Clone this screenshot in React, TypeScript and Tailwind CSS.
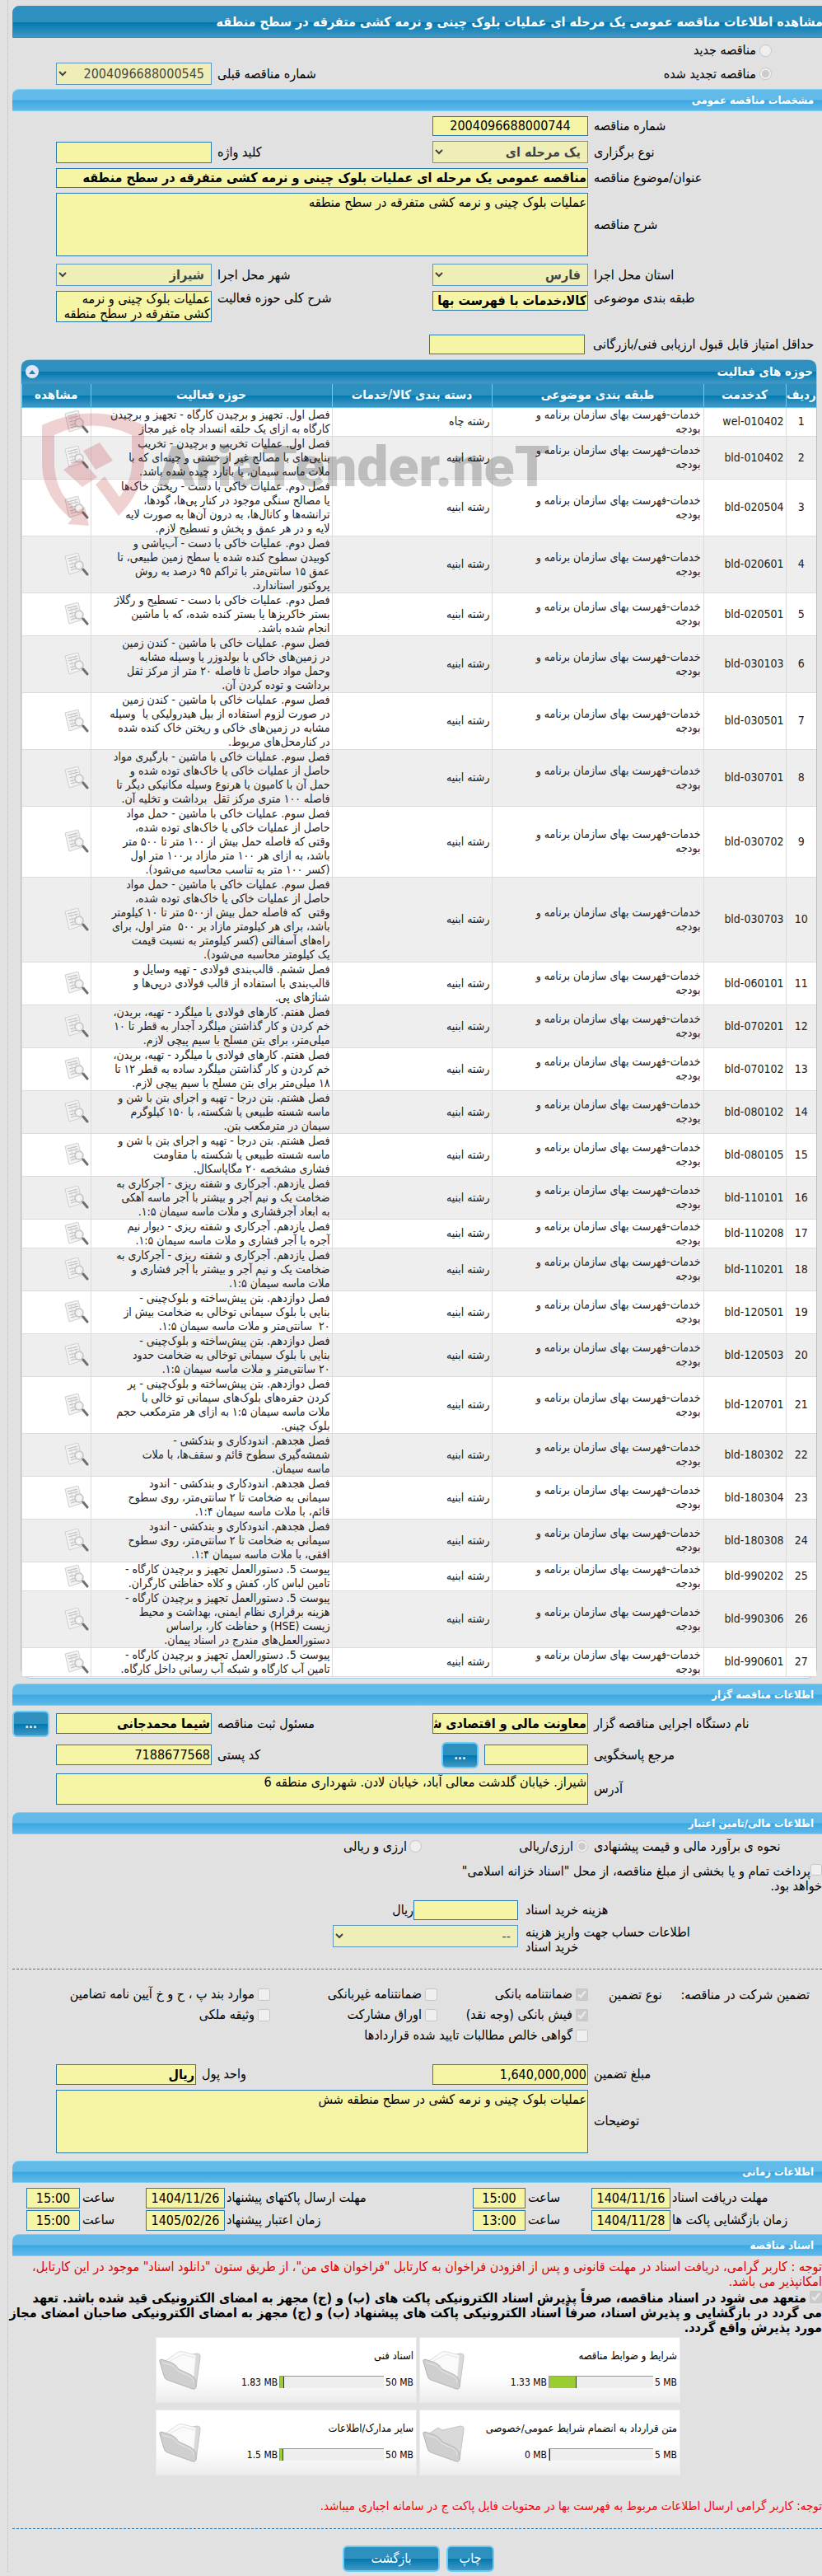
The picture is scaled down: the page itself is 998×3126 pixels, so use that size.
import type { ReactNode } from 'react';

const categoryText = 'خدمات-فهرست بهای سازمان برنامه و\nبودجه';

const activities = [
  { code: 'wel-010402', group: 'رشته چاه', text: 'فصل اول. تجهیز و برچیدن کارگاه - تجهیز و برچیدن\nکارگاه به ازای یک حلقه انسداد چاه غیر مجاز' },
  { code: 'bld-010402', group: 'رشته ابنیه', text: 'فصل اول. عملیات تخریب و برچیدن - تخریب\nبنایی‌های با مصالح غیر از خشتی و چینه‌ای که با\nملات ماسه سیمان، یا باتارد چیده شده باشد.' },
  { code: 'bld-020504', group: 'رشته ابنیه', text: 'فصل دوم. عملیات خاکی با دست - ریختن خاک‌ها\nیا مصالح سنگی موجود در کنار پی‌ها، گودها،\nترانشه‌ها و کانال‌ها، به درون آن‌ها به صورت لایه\nلایه و در هر عمق و پخش و تسطیح لازم.' },
  { code: 'bld-020601', group: 'رشته ابنیه', text: 'فصل دوم. عملیات خاکی با دست - آب‌پاشی و\nکوبیدن سطوح کنده شده یا سطح زمین طبیعی، تا\nعمق ۱۵ سانتی‌متر با تراکم ۹۵ درصد به روش\nپروکتور استاندارد.' },
  { code: 'bld-020501', group: 'رشته ابنیه', text: 'فصل دوم. عملیات خاکی با دست - تسطیح و رگلاژ\nبستر خاکریزها یا بستر کنده شده، که با ماشین\nانجام شده باشد.' },
  { code: 'bld-030103', group: 'رشته ابنیه', text: 'فصل سوم. عملیات خاکی با ماشین - کندن زمین\nدر زمین‌های خاکی با بولدوزر یا وسیله مشابه\nوحمل مواد حاصل تا فاصله ۲۰ متر از مرکز ثقل\nبرداشت و توده کردن آن.' },
  { code: 'bld-030501', group: 'رشته ابنیه', text: 'فصل سوم. عملیات خاکی با ماشین - کندن زمین\nدر صورت لزوم استفاده از بیل هیدرولیکی یا  وسیله\nمشابه در زمین‌های خاکی و ریختن خاک کنده شده\nدر کنارمحل‌های مربوط.' },
  { code: 'bld-030701', group: 'رشته ابنیه', text: 'فصل سوم. عملیات خاکی با ماشین - بارگیری مواد\nحاصل از عملیات خاکی یا خاک‌های توده شده و\nحمل آن با کامیون یا هرنوع وسیله مکانیکی دیگر تا\nفاصله ۱۰۰ متری مرکز ثقل  برداشت و تخلیه آن.' },
  { code: 'bld-030702', group: 'رشته ابنیه', text: 'فصل سوم. عملیات خاکی با ماشین - حمل مواد\nحاصل از عملیات خاکی یا خاک‌های توده شده،\nوقتی که فاصله حمل بیش از ۱۰۰ متر تا ۵۰۰ متر\nباشد، به ازای هر ۱۰۰ متر مازاد بر۱۰۰ متر اول\n(کسر ۱۰۰ متر به تناسب محاسبه می‌شود).' },
  { code: 'bld-030703', group: 'رشته ابنیه', text: 'فصل سوم. عملیات خاکی با ماشین - حمل مواد\nحاصل از عملیات خاکی یا خاک‌های توده شده،\nوقتی  که فاصله حمل بیش از۵۰۰ متر تا ۱۰ کیلومتر\nباشد، برای هر کیلومتر مازاد بر ۵۰۰  متر اول، برای\nراه‌های آسفالتی (کسر کیلومتر به نسبت قیمت\nیک کیلومتر محاسبه می‌شود).' },
  { code: 'bld-060101', group: 'رشته ابنیه', text: 'فصل ششم. قالب‌بندی فولادی - تهیه وسایل و\nقالب‌بندی با استفاده از قالب فولادی درپی‌ها و\nشناژهای پی.' },
  { code: 'bld-070201', group: 'رشته ابنیه', text: 'فصل هفتم. کارهای فولادی با میلگرد - تهیه، بریدن،\nخم کردن و کار گذاشتن میلگرد آجدار به قطر تا ۱۰\nمیلی‌متر، برای بتن مسلح با سیم پیچی لازم.' },
  { code: 'bld-070102', group: 'رشته ابنیه', text: 'فصل هفتم. کارهای فولادی با میلگرد - تهیه، بریدن،\nخم کردن و کار گذاشتن میلگرد ساده به قطر ۱۲ تا\n۱۸ میلی‌متر برای بتن مسلح با سیم پیچی لازم.' },
  { code: 'bld-080102', group: 'رشته ابنیه', text: 'فصل هشتم. بتن درجا - تهیه و اجرای بتن با شن و\nماسه شسته طبیعی یا شکسته، با ۱۵۰ کیلوگرم\nسیمان در مترمکعب بتن.' },
  { code: 'bld-080105', group: 'رشته ابنیه', text: 'فصل هشتم. بتن درجا - تهیه و اجرای بتن با شن و\nماسه شسته طبیعی یا شکسته با مقاومت\nفشاری مشخصه ۲۰ مگاپاسکال.' },
  { code: 'bld-110101', group: 'رشته ابنیه', text: 'فصل یازدهم. آجرکاری و شفته ریزی - آجرکاری به\nضخامت یک و نیم آجر و بیشتر با آجر ماسه آهکی\nبه ابعاد آجرفشاری و ملات ماسه سیمان ۱:۵.' },
  { code: 'bld-110208', group: 'رشته ابنیه', text: 'فصل یازدهم. آجرکاری و شفته ریزی - دیوار نیم\nآجره با آجر فشاری و ملات ماسه سیمان ۱:۵.' },
  { code: 'bld-110201', group: 'رشته ابنیه', text: 'فصل یازدهم. آجرکاری و شفته ریزی - آجرکاری به\nضخامت یک و نیم آجر و بیشتر با آجر فشاری و\nملات ماسه سیمان ۱:۵.' },
  { code: 'bld-120501', group: 'رشته ابنیه', text: 'فصل دوازدهم. بتن پیش‌ساخته و بلوک‌چینی -\nبنایی با بلوک سیمانی توخالی به ضخامت بیش از\n۲۰  سانتی‌متر و ملات ماسه سیمان ۱:۵.' },
  { code: 'bld-120503', group: 'رشته ابنیه', text: 'فصل دوازدهم. بتن پیش‌ساخته و بلوک‌چینی -\nبنایی با بلوک سیمانی توخالی به ضخامت حدود\n۲۰ سانتی‌متر و ملات ماسه سیمان ۱:۵.' },
  { code: 'bld-120701', group: 'رشته ابنیه', text: 'فصل دوازدهم. بتن پیش‌ساخته و بلوک‌چینی - پر\nکردن حفره‌های بلوک‌های سیمانی تو خالی با\nملات ماسه سیمان ۱:۵ به ازای هر مترمکعب حجم\nبلوک چینی.' },
  { code: 'bld-180302', group: 'رشته ابنیه', text: 'فصل هجدهم. اندودکاری و بندکشی -\nشمشه‌گیری سطوح قائم و سقف‌ها، با ملات\nماسه سیمان.' },
  { code: 'bld-180304', group: 'رشته ابنیه', text: 'فصل هجدهم. اندودکاری و بندکشی - اندود\nسیمانی به ضخامت تا ۲ سانتی‌متر، روی سطوح\nقائم، با ملات ماسه سیمان ۱:۴.' },
  { code: 'bld-180308', group: 'رشته ابنیه', text: 'فصل هجدهم. اندودکاری و بندکشی - اندود\nسیمانی به ضخامت تا ۲ سانتی‌متر، روی سطوح\nافقی، با ملات ماسه سیمان ۱:۴.' },
  { code: 'bld-990202', group: 'رشته ابنیه', text: 'پیوست 5. دستورالعمل تجهیز و برچیدن کارگاه -\nتامین لباس کار، کفش و کلاه حفاظتی کارگران.' },
  { code: 'bld-990306', group: 'رشته ابنیه', text: 'پیوست 5. دستورالعمل تجهیز و برچیدن کارگاه -\nهزینه برقراری نظام ایمنی، بهداشت و محیط\nزیست (HSE) و حفاظت کار، براساس\nدستورالعمل‌های مندرج در اسناد پیمان.' },
  { code: 'bld-990601', group: 'رشته ابنیه', text: 'پیوست 5. دستورالعمل تجهیز و برچیدن کارگاه -\nتامین آب کارگاه و شبکه آب رسانی داخل کارگاه.' },
];

const files = [
  { title: 'شرایط و ضوابط مناقصه', used: 1.33, max: 5 },
  { title: 'اسناد فنی', used: 1.83, max: 50 },
  { title: 'متن قرارداد به انضمام شرایط عمومی/خصوصی', used: 0, max: 5 },
  { title: 'سایر مدارک/اطلاعات', used: 1.5, max: 50 },
];

const guarantees = [
  { label: 'ضمانتنامه بانکی', checked: true },
  { label: 'ضمانتنامه غیربانکی', checked: false },
  { label: 'موارد بند پ ، ح و خ آیین نامه تضامین', checked: false },
  { label: 'فیش بانکی (وجه نقد)', checked: true },
  { label: 'اوراق مشارکت', checked: false },
  { label: 'وثیقه ملکی', checked: false },
  { label: 'گواهی خالص مطالبات تایید شده قراردادها', checked: false },
];

const field = 'block bg-[#f6f4a5] border border-[#2a78ad] text-base text-black px-px outline-none resize-none overflow-hidden';
const select = 'block h-[27px] w-full bg-[#f6f4a5] border border-[#2a78ad] text-base text-black px-1 disabled:opacity-70';
const label = 'text-end pe-[7px] whitespace-nowrap';
const formRow = 'grid grid-cols-[284px_189px_1fr_189px] items-center pl-[68px]';
const darkBar = 'bg-[linear-gradient(#2e90bf_0%,#2e90bf_50%,#0078b0_51%,#4298c4_100%)]';
const blueButton = `${darkBar} border-2 border-[#6ccbf5] rounded-md text-white h-8 cursor-pointer`;

const Section = ({ children }: { children: ReactNode }) => (
  <h2 className="ml-[15px] h-[27px] rounded-tl-lg border-y border-[#7fd0f7] bg-[linear-gradient(#62bae9_0%,#62bae9_48%,#3aa7e2_52%,#62bae9_100%)] pr-[10px] text-[13px] leading-[26px] font-bold text-white">
    {children}
  </h2>
);

const DocIcon = () => (
  <svg viewBox="0 0 30 28" className="h-7 w-[30px]">
    <path d="M1 4 17 0l5 21-16 5z" fill="#f3f3f3" stroke="#cfcfcf" />
    <path d="M4 7l12-3M5 10l12-3M6 14l12-3M7 18l8-2M8 21l7-2" stroke="#bdbdbd" strokeWidth="1.2" />
    <path d="M8 7l3 13M13 5l3 13" stroke="#d4d4d4" />
    <circle cx="18" cy="15" r="5" fill="#f4f4f4" fillOpacity="0.8" stroke="#c4c4c4" strokeWidth="1.5" />
    <path d="M23 20l5 6" stroke="#6f6f6f" strokeWidth="3" strokeLinecap="round" />
  </svg>
);

const FolderIcon = ({ full }: { full: boolean }) => (
  <svg viewBox="0 0 54 48" className="h-12 w-[54px]">
    <path d="M6 14 20 5l5 3 22-5q5 0 4 5l-5 36q-2 3-5 1z" fill="#d9d9d9" stroke="#c4c4c4" />
    {full && <path d="M9 12 26 0l20 5-3 33z" fill="#fafafa" stroke="#dcdcdc" />}
    {full && <path d="M14 12 30 4l14 4" fill="none" stroke="#e4e4e4" />}
    <path d="M2 13q-1-3 2-3l12 4q5 2 9 8l15 7q6 4 6 9v6q-1 3-4 2L11 35q-3-1-4-5z" fill="#cfcfcf" stroke="#b5b5b5" />
    <path d="M5 14l11 3q4 2 8 7l15 7q4 3 4 7" fill="none" stroke="#e6e6e6" />
  </svg>
);

const Watermark = () => (
  <div dir="ltr" className="pointer-events-none absolute top-[62px] left-[22px] flex items-start opacity-20">
    <svg viewBox="0 0 128 140" className="h-[140px] w-32 shrink-0" fill="#b81f25">
      <path d="M3 17Q64-12 127 17V66Q123 100 96 127L68 89l11-10 18 25Q112 85 112 62V29Q64 6 18 29V66Q20 100 46 121l9-5 5 23-26-2 5-6Q5 105 3 66z" />
      <path d="M53 48 73 38 89 60 68 71zM29 71l20-14 21 23-18 12z" />
    </svg>
    <span className="mt-6 ml-[15px] font-['Roboto'] text-[68px] leading-[88px] font-black whitespace-nowrap text-black">AriaTender.neT</span>
  </div>
);

const TimeRow = ({ items }: { items: { name: string; date: string; hour: string }[] }) => (
  <div className="mt-[2px] grid grid-cols-[184px_96px_80px_64px_1fr_96px_80px_65px] items-center pl-8">
    {items.map((item) => (
      <div key={item.name} className="contents">
        <label htmlFor={item.name} className="pe-[2px] text-end whitespace-nowrap">{item.name}</label>
        <input id={item.name} readOnly dir="ltr" className={`${field} h-[25px] w-full text-center`} value={item.date} />
        <label htmlFor={`${item.name}-hour`} className="pe-[3px] text-end">ساعت</label>
        <input id={`${item.name}-hour`} readOnly dir="ltr" className={`${field} h-[25px] w-full text-center`} value={item.hour} />
      </div>
    ))}
  </div>
);

export default function App() {
  return (
    <div dir="rtl" className="overflow-hidden bg-[#e1e1e1] pb-[5px] font-['DejaVu_Sans_Condensed','DejaVu_Sans',sans-serif] text-base leading-[18px] text-black">
      <main className="relative pt-[7px]">
        <div className="absolute inset-y-0 left-[9px] border-l border-dotted border-[#bbb]" />
        <h1 className={`${darkBar} -mr-1 ml-[15px] h-[39px] rounded-tl-lg border border-[#2a8fe0] pr-[2px] text-base leading-[38px] font-bold whitespace-nowrap text-white`}>
          مشاهده اطلاعات مناقصه عمومی یک مرحله ای عملیات بلوک چینی و نرمه کشی متفرقه در سطح منطقه
        </h1>

        <div className="mt-[5px] flex h-5 items-center gap-1 pr-[61px]">
          <input id="new" type="radio" name="kind" disabled className="size-[15px]" />
          <label htmlFor="new">مناقصه جدید</label>
        </div>
        <div className="mt-[5px] grid grid-cols-[473px_1fr_189px] items-center pl-[68px]">
          <div className="flex items-center gap-1 pr-[61px]">
            <input id="renewed" type="radio" name="kind" disabled defaultChecked className="size-[15px]" />
            <label htmlFor="renewed">مناقصه تجدید شده</label>
          </div>
          <label htmlFor="prev" className={label}>شماره مناقصه قبلی</label>
          <select id="prev" disabled className={select}><option>2004096688000545</option></select>
        </div>

        <div className="mt-[5px]"><Section>مشخصات مناقصه عمومی</Section></div>
        <div className={`${formRow} mt-[6px]`}>
          <label htmlFor="number" className={label}>شماره مناقصه</label>
          <input id="number" readOnly className={`${field} h-6 text-center`} value="2004096688000744" />
        </div>
        <div className={`${formRow} mt-[6px]`}>
          <label htmlFor="type" className={label}>نوع برگزاری</label>
          <select id="type" disabled className={`${select} font-bold`}><option>یک مرحله ای</option></select>
          <label htmlFor="keyword" className={label}>کلید واژه</label>
          <input id="keyword" className={`${field} h-[26px]`} />
        </div>
        <div className={`${formRow} mt-[6px]`}>
          <label htmlFor="subject" className={label}>عنوان/موضوع مناقصه</label>
          <input id="subject" readOnly className={`${field} col-span-3 h-6 font-bold`} value="مناقصه عمومی یک مرحله ای عملیات بلوک چینی و نرمه کشی متفرقه در سطح منطقه" />
        </div>
        <div className={`${formRow} mt-[6px]`}>
          <label htmlFor="desc" className={label}>شرح مناقصه</label>
          <textarea id="desc" readOnly className={`${field} col-span-3 h-[77px] leading-[22px]`} value="عملیات بلوک چینی و نرمه کشی متفرقه در سطح منطقه" />
        </div>
        <div className={`${formRow} mt-[9px]`}>
          <label htmlFor="province" className={label}>استان محل اجرا</label>
          <select id="province" disabled className={`${select} font-bold`}><option>فارس</option></select>
          <label htmlFor="city" className={label}>شهر محل اجرا</label>
          <select id="city" disabled className={`${select} font-bold`}><option>شیراز</option></select>
        </div>
        <div className={`${formRow} mt-[6px] items-start`}>
          <label htmlFor="class" className={label}>طبقه بندی موضوعی</label>
          <input id="class" readOnly className={`${field} h-6 font-bold`} value="کالا،خدمات با فهرست بها" />
          <label htmlFor="scope" className={label}>شرح کلی حوزه فعالیت</label>
          <textarea id="scope" readOnly className={`${field} h-[38px] leading-[18px]`} value="عملیات بلوک چینی و نرمه کشی متفرقه در سطح منطقه" />
        </div>
        <div className="mt-[15px] grid grid-cols-[288px_189px] items-center">
          <label htmlFor="score" className="pe-[10px] text-end whitespace-nowrap">حداقل امتیاز قابل قبول ارزیابی فنی/بازرگانی</label>
          <input id="score" className={`${field} h-6`} />
        </div>

        <section className="relative mt-[6px] mr-[6px] ml-[25px] rounded-xl border border-[#9cc6e2] bg-white pb-px">
          <div className={`${darkBar} flex h-[29px] items-center justify-between rounded-t-lg border-b border-[#3a8fe0] pr-1 pl-[5px] text-[15px] font-bold text-white`}>
            <h2>حوزه های فعالیت</h2>
            <button aria-label="بستن" className="flex size-4 items-center justify-center rounded-full bg-[#dfe8f8]">
              <svg viewBox="0 0 8 5" className="h-[5px] w-2" fill="#1b7fb5"><path d="M4 0l4 5H0z" /></svg>
            </button>
          </div>
          <table className="w-full table-fixed border-collapse text-sm text-[#222]">
            <colgroup>
              <col className="w-[37px]" />
              <col className="w-[100px]" />
              <col className="w-[257px]" />
              <col className="w-[194px]" />
              <col className="w-[293px]" />
              <col />
            </colgroup>
            <thead>
              <tr className={`${darkBar} h-7 border-b border-[#6ccbf5] text-[15px] text-white`}>
                {['ردیف', 'کدخدمت', 'طبقه بندی موضوعی', 'دسته بندی کالا/خدمات', 'حوزه فعالیت', 'مشاهده'].map((head) => (
                  <th key={head} className="border-l border-[#6ccbf5] p-0 font-bold">{head}</th>
                ))}
              </tr>
            </thead>
            <tbody>
              {activities.map((row, i) => (
                <tr key={row.code} className="border-b border-[#dcdcdc] leading-[17px] odd:bg-white even:bg-[#eee]">
                  <td className="border-l border-[#dcdcdc] p-0 text-center">{i + 1}</td>
                  <td className="border-l border-[#dcdcdc] px-[2px] py-0"><bdi>{row.code}</bdi></td>
                  <td className="border-l border-[#dcdcdc] px-[3px] py-0 whitespace-pre">{categoryText}</td>
                  <td className="border-l border-[#dcdcdc] px-[2px] py-0">{row.group}</td>
                  <td className="border-l border-[#dcdcdc] px-[2px] py-0 whitespace-pre">{row.text}</td>
                  <td className="border-l border-[#dcdcdc] px-[2px] py-0">
                    <button aria-label="مشاهده" className="block"><DocIcon /></button>
                  </td>
                </tr>
              ))}
            </tbody>
          </table>
          <Watermark />
        </section>

        <div className="mt-[6px]"><Section>اطلاعات مناقصه گزار</Section></div>
        <div className="mt-[6px] grid grid-cols-[284px_189px_1fr_189px_38px] items-center gap-y-[6px] pl-[30px]">
          <label htmlFor="agency" className={label}>نام دستگاه اجرایی مناقصه گزار</label>
          <input id="agency" readOnly className={`${field} h-[25px] font-bold`} value="معاونت مالی و اقتصادی شیراز" />
          <label htmlFor="clerk" className={label}>مسئول ثبت مناقصه</label>
          <input id="clerk" readOnly className={`${field} h-[25px] font-bold`} value="شیما محمدجانی" />
          <button className={`${blueButton} mr-2 w-[45px] text-sm font-bold`}>...</button>
          <label htmlFor="contact" className={label}>مرجع پاسخگویی</label>
          <div className="flex items-center gap-[7px]">
            <input id="contact" className={`${field} h-[25px] w-[126px]`} />
            <button className={`${blueButton} w-[45px] text-sm font-bold`}>...</button>
          </div>
          <label htmlFor="postal" className={label}>کد پستی</label>
          <input id="postal" readOnly className={`${field} h-[25px]`} value="7188677568" />
        </div>
        <div className={`${formRow} mt-[6px]`}>
          <label htmlFor="address" className={label}>آدرس</label>
          <textarea id="address" readOnly className={`${field} col-span-3 h-[38px] leading-[20px]`} value="شیراز. خیابان گلدشت معالی آباد، خیابان لادن. شهرداری منطقه 6" />
        </div>

        <div className="mt-[9px]"><Section>اطلاعات مالی/تامین اعتبار</Section></div>
        <div className="mt-[6px] grid grid-cols-[284px_202px_1fr] items-center">
          <span className={label}>نحوه ی برآورد مالی و قیمت پیشنهادی</span>
          <div className="flex items-center gap-[3px]">
            <input id="rial" type="radio" name="currency" disabled defaultChecked className="size-[15px]" />
            <label htmlFor="rial">ارزی/ریالی</label>
          </div>
          <div className="flex items-center gap-[3px]">
            <input id="both" type="radio" name="currency" disabled className="size-[15px]" />
            <label htmlFor="both">ارزی و ریالی</label>
          </div>
        </div>
        <div className="mt-3">
          <input id="treasury" type="checkbox" disabled className="size-[14px] align-top" />
          <label htmlFor="treasury">
            پرداخت تمام و یا بخشی از مبلغ مناقصه، از محل "اسناد خزانه اسلامی"
            <br />خواهد بود.
          </label>
        </div>
        <div className="mt-2 grid grid-cols-[369px_127px_1fr] items-center">
          <label htmlFor="cost" className="pe-[9px] text-end">هزینه خرید اسناد</label>
          <input id="cost" className={`${field} h-6`} />
          <span>ریال</span>
        </div>
        <div className="mt-[6px] grid grid-cols-[369px_225px] items-start">
          <label htmlFor="account" className="pe-[9px] text-end">
            اطلاعات حساب جهت واریز هزینه
            <br />خرید اسناد
          </label>
          <select id="account" disabled className={select}><option>--</option></select>
        </div>

        <hr className="mt-[17px] ml-[15px] border-dashed border-[#2a78ad]" />
        <div className="mt-[18px] grid grid-cols-[284px_1fr] items-start">
          <div className="flex justify-between pt-1 pr-[15px] pl-[25px] whitespace-nowrap">
            <span>تضمین شرکت در مناقصه:</span>
            <span>نوع تضمین</span>
          </div>
          <div className="grid grid-cols-[183px_203px_1fr]">
            {guarantees.map((g) => (
              <div key={g.label} className="flex h-[25px] items-center gap-1 whitespace-nowrap">
                <input id={g.label} type="checkbox" disabled defaultChecked={g.checked} className="size-[15px] shrink-0" />
                <label htmlFor={g.label}>{g.label}</label>
              </div>
            ))}
          </div>
        </div>

        <div className="mt-[22px] grid grid-cols-[284px_189px_1fr_170px] items-center pl-[68px]">
          <label htmlFor="amount" className={label}>مبلغ تضمین</label>
          <input id="amount" readOnly className={`${field} h-[25px]`} value="1,640,000,000" />
          <label htmlFor="unit" className={label}>واحد پول</label>
          <input id="unit" readOnly className={`${field} h-[25px] font-bold`} value="ریال" />
        </div>
        <div className={`${formRow} mt-[6px]`}>
          <label htmlFor="notes" className={label}>توضیحات</label>
          <textarea id="notes" readOnly className={`${field} col-span-3 h-[77px] leading-[22px]`} value="عملیات بلوک چینی و نرمه کشی در سطح منطقه شش" />
        </div>

        <div className="mt-[9px]"><Section>اطلاعات زمانی</Section></div>
        <div className="mt-[6px]">
          <TimeRow items={[
            { name: 'مهلت دریافت اسناد', date: '1404/11/16', hour: '15:00' },
            { name: 'مهلت ارسال پاکتهای پیشنهاد', date: '1404/11/26', hour: '15:00' },
          ]} />
          <TimeRow items={[
            { name: 'زمان بازگشایی پاکت ها', date: '1404/11/28', hour: '13:00' },
            { name: 'زمان اعتبار پیشنهاد', date: '1405/02/26', hour: '15:00' },
          ]} />
        </div>

        <div className="mt-1"><Section>اسناد مناقصه</Section></div>
        <p className="mt-1 ml-[15px] text-[#e00000]">
          توجه : کاربر گرامی، دریافت اسناد در مهلت قانونی و پس از افزودن فراخوان به کارتابل "فراخوان های من"، از طریق ستون "دانلود اسناد" موجود در این کارتابل،
          <br />امکانپذیر می باشد.
        </p>
        <div className="mt-[2px] ml-[10px] font-bold whitespace-nowrap">
          <input id="commit" type="checkbox" disabled defaultChecked className="ml-1 size-[15px] align-top" />
          <label htmlFor="commit">
            متعهد می شود در اسناد مناقصه، صرفاً پذیرش اسناد الکترونیکی پاکت های (ب) و (ج) مجهز به امضای الکترونیکی قید شده باشد. تعهد
            <br />می گردد در بازگشایی و پذیرش اسناد، صرفاً اسناد الکترونیکی پاکت های پیشنهاد (ب) و (ج) مجهز به امضای الکترونیکی صاحبان امضای مجاز
            <br />مورد پذیرش واقع گردد.
          </label>
        </div>

        <div className="mt-[2px] mr-[172px] grid grid-cols-[317px_317px] gap-x-[3px] gap-y-2 text-xs">
          {files.map((file) => (
            <div key={file.title} className="flex h-20 justify-between border border-[#eaeaea] bg-gradient-to-b from-white from-60% to-[#ececec] pr-[3px] pl-[2px]">
              <div>
                <div className="mt-[14px] text-[13px] leading-4 whitespace-nowrap">{file.title}</div>
                <div dir="ltr" className="mt-4 flex h-4 items-center justify-end gap-[2px]">
                  <span>{file.used} MB</span>
                  <span className="h-[15px] w-[127px] border-t border-l border-[#999] bg-[#eee]">
                    <span className="block h-full border-r border-[#333] bg-[#9acd32]" style={{ width: `${(file.used / file.max) * 100}%` }} />
                  </span>
                  <span>{file.max} MB</span>
                </div>
              </div>
              <div className="pt-4"><FolderIcon full={file.used > 0} /></div>
            </div>
          ))}
        </div>

        <p className="mt-7 text-[15px] leading-[18px] text-[#f00]">
          توجه: کاربر گرامی ارسال اطلاعات مربوط به فهرست بها در محتویات فایل پاکت ج در سامانه اجباری میباشد.
        </p>
        <hr className="mt-[18px] ml-[15px] border-dashed border-[#2a78ad]" />
        <div className="mt-5 flex justify-center gap-2 pl-[18px]">
          <button className={`${blueButton} w-[58px] text-base`}>چاپ</button>
          <button className={`${blueButton} w-[118px] text-base`}>بازگشت</button>
        </div>
      </main>
    </div>
  );
}
